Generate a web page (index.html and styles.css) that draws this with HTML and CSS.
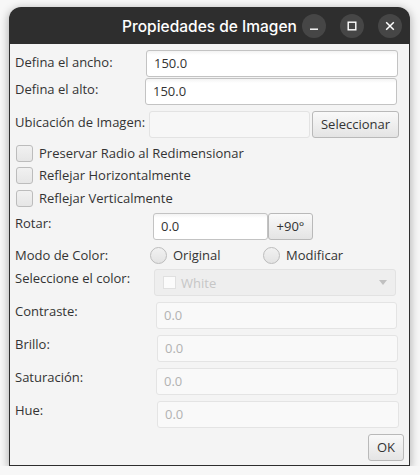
FILE: index.html
```html
<!DOCTYPE html>
<html lang="es">
<head>
<meta charset="utf-8">
<title>Propiedades de Imagen</title>
<link rel="stylesheet" href="styles.css">
</head>
<body>
<div class="window">
  <div class="titlebar">
    <span class="title">Propiedades de Imagen</span>
    <div class="controls">
      <span class="wbtn"><svg width="24" height="24" viewBox="0 0 24 24"><rect x="8" y="14.5" width="8" height="1.4" fill="#fff"/></svg></span>
      <span class="wbtn"><svg width="24" height="24" viewBox="0 0 24 24"><rect x="8.2" y="8.2" width="7.6" height="7.6" fill="none" stroke="#fff" stroke-width="1.4"/></svg></span>
      <span class="wbtn"><svg width="24" height="24" viewBox="0 0 24 24"><path d="M8.2 8.2l7.6 7.6M15.8 8.2l-7.6 7.6" stroke="#fff" stroke-width="1.5" fill="none"/></svg></span>
    </div>
  </div>
  <div class="content">
    <div class="row r-ancho"><span class="lbl">Defina el ancho:</span><div class="field w-ancho">150.0</div></div>
    <div class="row r-alto"><span class="lbl">Defina el alto:</span><div class="field w-alto">150.0</div></div>
    <div class="row r-ubic"><span class="lbl">Ubicación de Imagen:</span><div class="field soft w-ubic"></div><div class="btn w-sel">Seleccionar</div></div>
    <div class="check c1"><span class="box"></span><span>Preservar Radio al Redimensionar</span></div>
    <div class="check c2"><span class="box"></span><span>Reflejar Horizontalmente</span></div>
    <div class="check c3"><span class="box"></span><span>Reflejar Verticalmente</span></div>
    <div class="row r-rotar"><span class="lbl">Rotar:</span><div class="field w-rotar">0.0</div><div class="btn w-90">+90°</div></div>
    <div class="row r-modo"><span class="lbl">Modo de Color:</span>
      <div class="radio r-orig"><span class="dot"></span><span>Original</span></div>
      <div class="radio"><span class="dot"></span><span>Modificar</span></div>
    </div>
    <div class="row r-color"><span class="lbl">Seleccione el color:</span>
      <div class="combo"><span class="swatch"></span><span class="ctext">White</span><span class="arrow"></span></div>
    </div>
    <div class="row r-con"><span class="lbl">Contraste:</span><div class="field off w-dis">0.0</div></div>
    <div class="row r-bri"><span class="lbl">Brillo:</span><div class="field off w-dis">0.0</div></div>
    <div class="row r-sat"><span class="lbl">Saturación:</span><div class="field off w-dis2">0.0</div></div>
    <div class="row r-hue"><span class="lbl">Hue:</span><div class="field off w-dis2">0.0</div></div>
    <div class="footer"><div class="btn w-ok">OK</div></div>
  </div>
</div>
</body>
</html>
```
FILE: styles.css
```css
body {
  margin: 0;
  background: #f7f7f7;
  font-family: "Open Sans", "Noto Sans", sans-serif;
  font-size: 13px;
  color: #333;
}
.window {
  margin: 7px 0 0 9px;
  width: 401px;
  border-radius: 12px 12px 0 0;
  box-shadow: 0 2px 9px 1px rgba(0, 0, 0, 0.28);
}
.titlebar {
  height: 37px;
  background: #2e2e2e;
  border-radius: 12px 12px 0 0;
  display: grid;
  grid-template-columns: 1fr auto 1fr;
  align-items: center;
}
.title {
  grid-column: 2;
  color: #fff;
  font-family: Inter, "Noto Sans", sans-serif;
  font-weight: 500;
  font-size: 15.5px;
  padding-top: 1px;
}
.controls {
  grid-column: 3;
  justify-self: end;
  display: flex;
  gap: 14px;
  padding-right: 8px;
  padding-top: 1px;
}
.wbtn {
  width: 24px;
  height: 24px;
  border-radius: 50%;
  background: #464646;
  display: block;
}
.wbtn svg { display: block; }
.content {
  background: #f4f4f4;
  border: 1px solid #2e2e2e;
  border-top: none;
  padding: 6px 5px 4px 5px;
}
.row {
  display: flex;
  align-items: flex-start;
}
.lbl {
  flex: none;
  line-height: 18px;
}
.field {
  box-sizing: border-box;
  height: 27px;
  border: 1px solid #c3c3c3;
  border-radius: 3px;
  background: linear-gradient(#f3f3f3, #fff 4px);
  padding: 0 7px;
  line-height: 25px;
  color: #333;
  flex: none;
}
.field.soft {
  border-color: #e3e3e3;
  background: #f7f7f7;
}
.field.off {
  border-color: #e4e4e4;
  background: #f9f9f9;
  color: #b2b2b2;
}
.btn {
  box-sizing: border-box;
  height: 27px;
  border: 1px solid #b9b9b9;
  border-radius: 3px;
  background: linear-gradient(#f9f9f9, #e4e4e4);
  line-height: 25px;
  text-align: center;
  flex: none;
}
/* rows */
.r-ancho .lbl { width: 131px; padding-top: 3px; }
.w-ancho { width: 252px; }
.r-alto { margin-top: 1px; }
.r-alto .lbl { width: 130px; padding-top: 2px; }
.w-alto { width: 252px; }
.r-ubic { margin-top: 6px; }
.r-ubic .lbl { width: 134px; padding-top: 2px; }
.w-ubic { width: 161px; margin-right: 2px; }
.w-sel { width: 87px; }
.check {
  display: flex;
  align-items: center;
  gap: 6px;
  height: 17px;
  padding-left: 1px;
  line-height: 17px;
}
.c1 { margin-top: 7px; }
.c2 { margin-top: 5px; }
.c3 { margin-top: 6px; }
.box {
  box-sizing: border-box;
  width: 17px;
  height: 17px;
  border: 1px solid #bcbcbc;
  border-radius: 3px;
  background: linear-gradient(#f1f1f1, #e6e6e6);
  flex: none;
}
.r-rotar { margin-top: 6px; }
.r-rotar .lbl { width: 138px; padding-top: 1px; }
.w-rotar { width: 115px; }
.w-90 { width: 45px; }
.r-modo { margin-top: 6px; height: 18px; align-items: center; }
.r-modo .lbl { width: 135px; }
.radio {
  display: flex;
  align-items: center;
  gap: 6px;
}
.r-orig { width: 113px; }
.dot {
  box-sizing: border-box;
  width: 17px;
  height: 17px;
  border-radius: 50%;
  border: 1px solid #bcbcbc;
  background: linear-gradient(#f1f1f1, #e3e3e3);
  flex: none;
}
.r-color { margin-top: 5px; }
.r-color .lbl { width: 139px; }
.combo {
  box-sizing: border-box;
  width: 242px;
  height: 27px;
  border: 1px solid #e2e2e2;
  border-radius: 3px;
  background: #eeeeee;
  display: flex;
  align-items: center;
  padding-left: 8px;
  color: #c6c6c6;
}
.swatch {
  box-sizing: border-box;
  width: 13px;
  height: 13px;
  border: 1px solid #e0e0e0;
  background: #fbfbfb;
  margin-right: 5px;
}
.ctext { flex: 1; }
.arrow {
  width: 0;
  height: 0;
  border-left: 4.5px solid transparent;
  border-right: 4.5px solid transparent;
  border-top: 5px solid #c0c0c0;
  margin-right: 8px;
}
.r-con { margin-top: 6px; }
.r-con .lbl { width: 141px; }
.r-bri { margin-top: 6px; }
.r-bri .lbl { width: 142px; }
.r-sat { margin-top: 6px; }
.r-sat .lbl { width: 141px; }
.r-hue { margin-top: 6px; }
.r-hue .lbl { width: 142px; }
.w-dis { width: 241px; }
.w-dis2 { width: 242px; }
.footer {
  display: flex;
  justify-content: flex-end;
  margin-top: 6px;
}
.w-ok { width: 36px; }
```
